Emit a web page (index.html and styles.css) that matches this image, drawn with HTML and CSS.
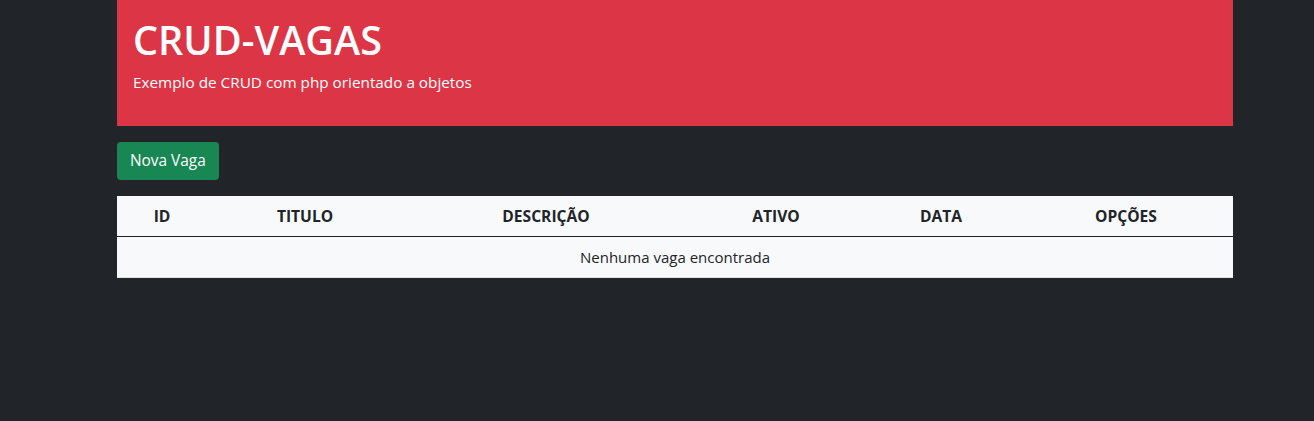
FILE: index.html
```html
<!DOCTYPE html>
<html lang="pt-BR">
<head>
<meta charset="utf-8">
<title>CRUD-VAGAS</title>
<link rel="stylesheet" href="styles.css">
</head>
<body>
<div class="container">
  <header class="hero">
    <h1 class="hero-title">CRUD-VAGAS</h1>
    <p class="hero-sub">Exemplo de CRUD com php orientado a objetos</p>
  </header>
  <section class="actions">
    <a class="btn-success" href="#">Nova Vaga</a>
  </section>
  <table class="table">
    <colgroup>
      <col class="c1"><col class="c2"><col class="c3"><col class="c4"><col class="c5"><col class="c6">
    </colgroup>
    <thead>
      <tr><th>ID</th><th>TITULO</th><th>DESCRIÇÃO</th><th>ATIVO</th><th>DATA</th><th>OPÇÕES</th></tr>
    </thead>
    <tbody>
      <tr><td colspan="6">Nenhuma vaga encontrada</td></tr>
    </tbody>
  </table>
</div>
</body>
</html>
```
FILE: styles.css
```css
html, body {
  margin: 0;
  padding: 0;
  background: #212529;
  font-family: "Open Sans", "Noto Sans", sans-serif;
  color: #212529;
}
.container {
  width: 1116px;
  margin-left: 117px;
}
.hero {
  background: #dc3545;
  color: #fff;
  padding: 16px 16px 20px;
  height: 90px;
}
.hero-title {
  margin: 0;
  font-size: 39.6px;
  font-weight: 600;
  line-height: 48px;
}
.hero-sub {
  margin: 6px 0 0;
  font-size: 15.3px;
  line-height: 24px;
}
.actions {
  padding: 16px 0;
  display: flex;
}
.btn-success {
  display: inline-block;
  background: #198754;
  color: #fff;
  text-decoration: none;
  font-size: 15.4px;
  line-height: 24px;
  padding: 7px 13px;
  border-radius: 4px;
  height: 24px;
}
.table {
  width: 1116px;
  border-collapse: collapse;
  table-layout: fixed;
  background: #f8f9fa;
}
.c1 { width: 90px; }
.c2 { width: 196px; }
.c3 { width: 286px; }
.c4 { width: 174px; }
.c5 { width: 156px; }
.c6 { width: 214px; }
.table th, .table td {
  text-align: center;
  padding: 8px;
  font-size: 15px;
  line-height: 24px;
}
.table th {
  font-size: 15.6px;
  font-weight: 700;
  border-bottom: 1px solid #212529;
}
.table td {
  border-bottom: 1px solid #dee2e6;
}
```
